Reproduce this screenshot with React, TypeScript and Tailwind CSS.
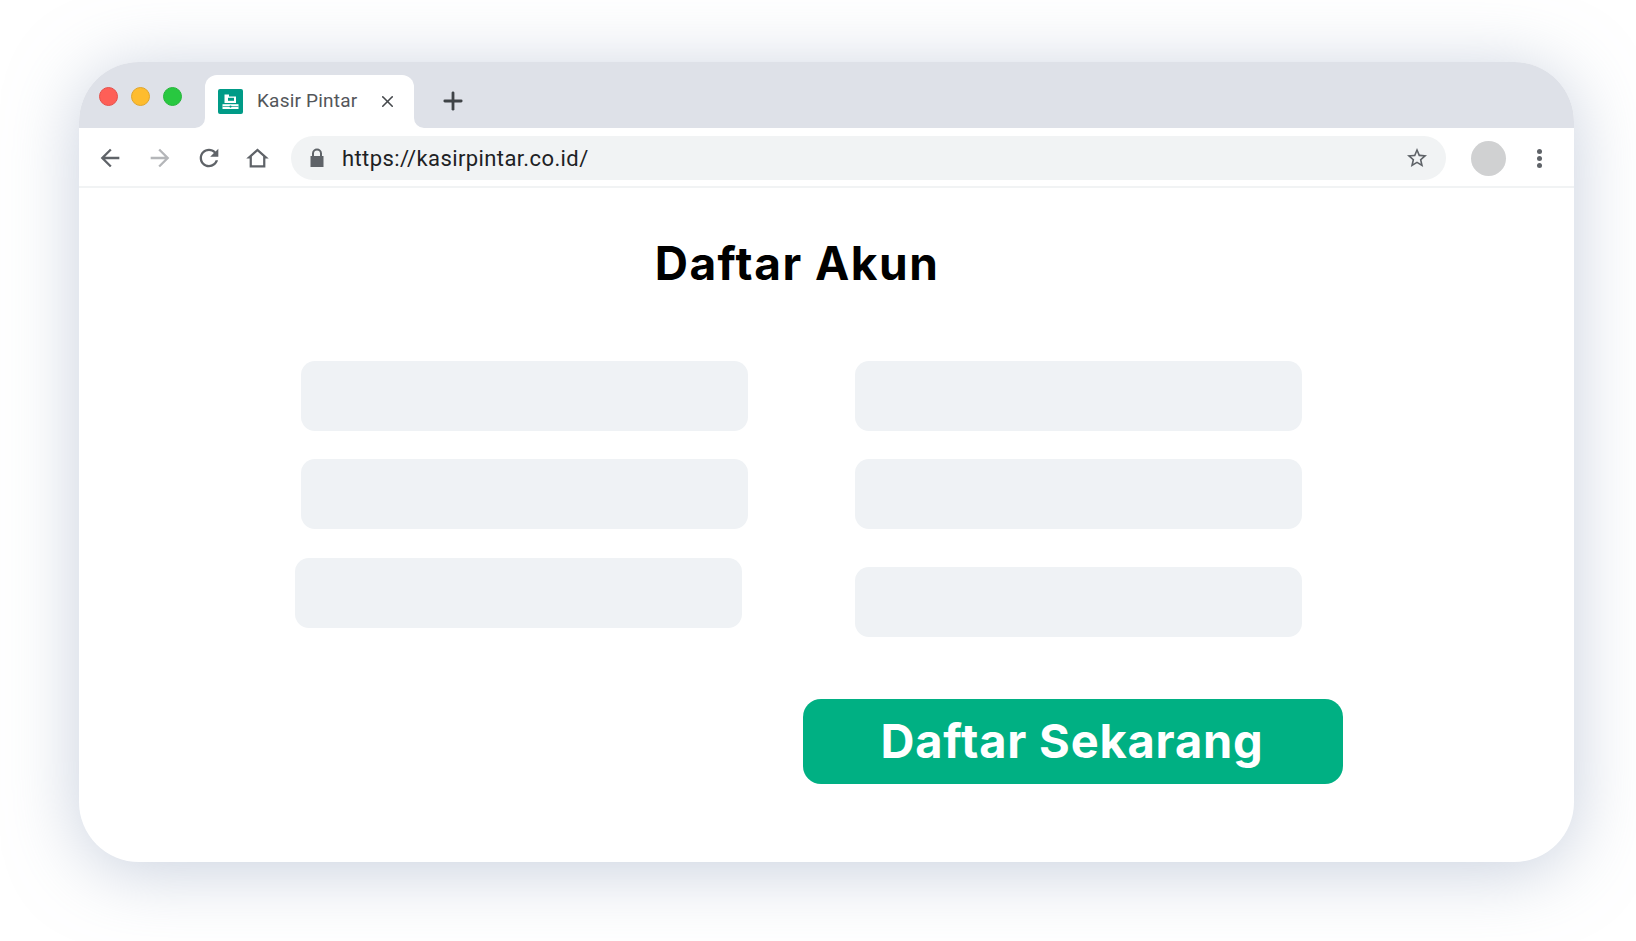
import React from 'react';
import { X, Plus } from 'lucide-react';

const Field = ({ className = '' }: { className?: string }) => (
  <div className={`h-[70px] w-[447px] rounded-[14px] bg-[#eff2f5] ${className}`} />
);

const Favicon = () => (
  <svg width="25" height="25" viewBox="0 0 25 25" className="shrink-0">
    <rect width="25" height="25" rx="2" fill="#009b87" />
    <path d="M6.5 5.5h4.5v2h7v6.5h-11.500z" fill="#fff" />
    <rect x="10" y="8.800" width="6" height="3" fill="#009b87" />
    <rect x="4.500" y="15.200" width="16" height="4.800" fill="#fff" />
    <rect x="4.500" y="17" width="16" height=".7" fill="#009b87" />
    <circle cx="12.500" cy="17.600" r="1.100" fill="#009b87" />
  </svg>
);

// inverted corner either side of the active tab
const TabFlare = ({ side }: { side: 'left' | 'right' }) => (
  <svg width="10" height="10" viewBox="0 0 10 10" className={`absolute bottom-0 ${side === 'left' ? '-left-[10px]' : '-right-[10px]'}`}>
    <path d={side === 'left' ? 'M10 0v10H0a10 10 0 0 0 10-10z' : 'M0 0v10h10A10 10 0 0 1 0 0z'} fill="#fff" />
  </svg>
);

const Glyph = ({ d, size, className = '' }: { d: string; size: number; className?: string }) => (
  <svg width={size} height={size} viewBox="0 0 24 24" fill="currentColor" className={`shrink-0 ${className}`}>
    <path d={d} />
  </svg>
);

const ARROW_LEFT = 'M20 11H7.830l5.590-5.590L12 4l-8 8 8 8 1.410-1.410L7.830 13H20v-2z';
const ARROW_RIGHT = 'M4 11h12.170l-5.590-5.590L12 4l8 8-8 8-1.410-1.410L16.170 13H4v-2z';
const REFRESH = 'M17.650 6.350C16.200 4.900 14.210 4 12 4c-4.420 0-7.990 3.580-7.990 8s3.570 8 7.990 8c3.730 0 6.840-2.550 7.730-6h-2.080c-.820 2.330-3.040 4-5.650 4-3.310 0-6-2.690-6-6s2.690-6 6-6c1.660 0 3.140.690 4.220 1.780L13 11h7V4l-2.350 2.350z';
const HOME = 'M12 3L2 12h3v8h14v-8h3L12 3zm0 2.690l5 4.500V18H7v-7.810l5-4.500z';
const STAR = 'M22 9.240l-7.190-.620L12 2 9.190 8.630 2 9.240l5.460 4.730L5.820 21 12 17.270 18.180 21l-1.630-7.030L22 9.240zM12 15.400l-3.760 2.270 1-4.280-3.320-2.880 4.380-.380L12 6.100l1.710 4.040 4.380.380-3.320 2.880 1 4.280L12 15.400z';

export default function App() {
  return (
    <div className="h-[941px] w-[1636px] overflow-hidden bg-white pl-[79px] pt-[62px]">
      <div className="h-[800px] w-[1495px] overflow-hidden rounded-[60px] bg-white shadow-[0_8px_70px_rgba(145,162,190,0.5)]">
        {/* Tab strip */}
        <div className="flex h-[66px] items-end bg-[#dee1e8]">
          <div className="mb-[22px] ml-[20px] flex gap-[13px]">
            <div className="h-[19px] w-[19px] rounded-full border border-[#e5504b] bg-[#fe5f57]" />
            <div className="h-[19px] w-[19px] rounded-full border border-[#dfa52c] bg-[#febc2e]" />
            <div className="h-[19px] w-[19px] rounded-full border border-[#27b53b] bg-[#28c840]" />
          </div>
          <div className="relative ml-[23px] flex h-[53px] w-[209px] items-center rounded-t-[12px] bg-white pl-[13px]">
            <TabFlare side="left" />
            <TabFlare side="right" />
            <Favicon />
            <span className="ml-[14px] whitespace-nowrap font-['Roboto',sans-serif] text-[19px] tracking-[0.2px] text-[#53565a]">Kasir Pintar</span>
            <X size={19} strokeWidth={2} className="ml-[21px] shrink-0 text-[#45484c]" />
          </div>
          <Plus size={28} strokeWidth={2.400} className="mb-[13px] ml-[25px] text-[#3f4347]" />
        </div>

        {/* Toolbar */}
        <div className="flex h-[60px] items-center border-b-2 border-[#f1f3f4] bg-white pl-[17px] pr-[25px] pt-[2px]">
          <Glyph d={ARROW_LEFT} size={28} className="text-[#5f6368]" />
          <Glyph d={ARROW_RIGHT} size={28} className="ml-[22px] text-[#b4b6b9]" />
          <Glyph d={REFRESH} size={28} className="ml-[21px] text-[#5f6368]" />
          <Glyph d={HOME} size={27} className="ml-[21px] text-[#5f6368]" />
          <div className="ml-[20px] flex h-[44px] w-[1155px] items-center rounded-full bg-[#f1f3f4] pl-[18px] pr-[17px]">
            <svg width="16" height="20" viewBox="0 0 16 20" className="shrink-0">
              <path d="M3 8V5.500a5 5 0 0 1 10 0V8h1.500v11h-13V8zm2 0h6V5.500a3 3 0 0 0-6 0z" fill="#5f6368" />
            </svg>
            <span className="ml-[17px] font-['Roboto',sans-serif] text-[22px] tracking-[0.4px] text-[#202124]">https://kasirpintar.co.id/</span>
            <Glyph d={STAR} size={24} className="ml-auto text-[#5f6368]" />
          </div>
          <div className="ml-[25px] h-[35px] w-[35px] rounded-full bg-[#d0d1d2]" />
          <div className="ml-[31px] flex flex-col gap-[2px]">
            <div className="h-[5px] w-[5px] rounded-full bg-[#5f6368]" />
            <div className="h-[5px] w-[5px] rounded-full bg-[#5f6368]" />
            <div className="h-[5px] w-[5px] rounded-full bg-[#5f6368]" />
          </div>
        </div>

        {/* Page content */}
        <div className="ml-[221px] w-[1002px] pt-[47px]">
          <h1 className="pr-[8px] text-center font-['Inter',sans-serif] text-[46px] font-bold leading-[56px] tracking-[1.500px] text-black">Daftar Akun</h1>
          <div className="mt-[70px] flex gap-[107px]">
            <div className="flex flex-col">
              <Field className="ml-[1px]" />
              <Field className="ml-[1px] mt-[28px]" />
              <Field className="-ml-[5px] mt-[29px]" />
            </div>
            <div className="flex flex-col">
              <Field />
              <Field className="mt-[28px]" />
              <Field className="mt-[38px]" />
            </div>
          </div>
          <button className="ml-[503px] mt-[62px] flex h-[85px] w-[540px] shrink-0 items-center justify-center rounded-[18px] bg-[#00b083] pr-[2px] font-['Inter',sans-serif] text-[47px] font-bold tracking-[0.800px] text-white">
            Daftar Sekarang
          </button>
        </div>
      </div>
    </div>
  );
}
